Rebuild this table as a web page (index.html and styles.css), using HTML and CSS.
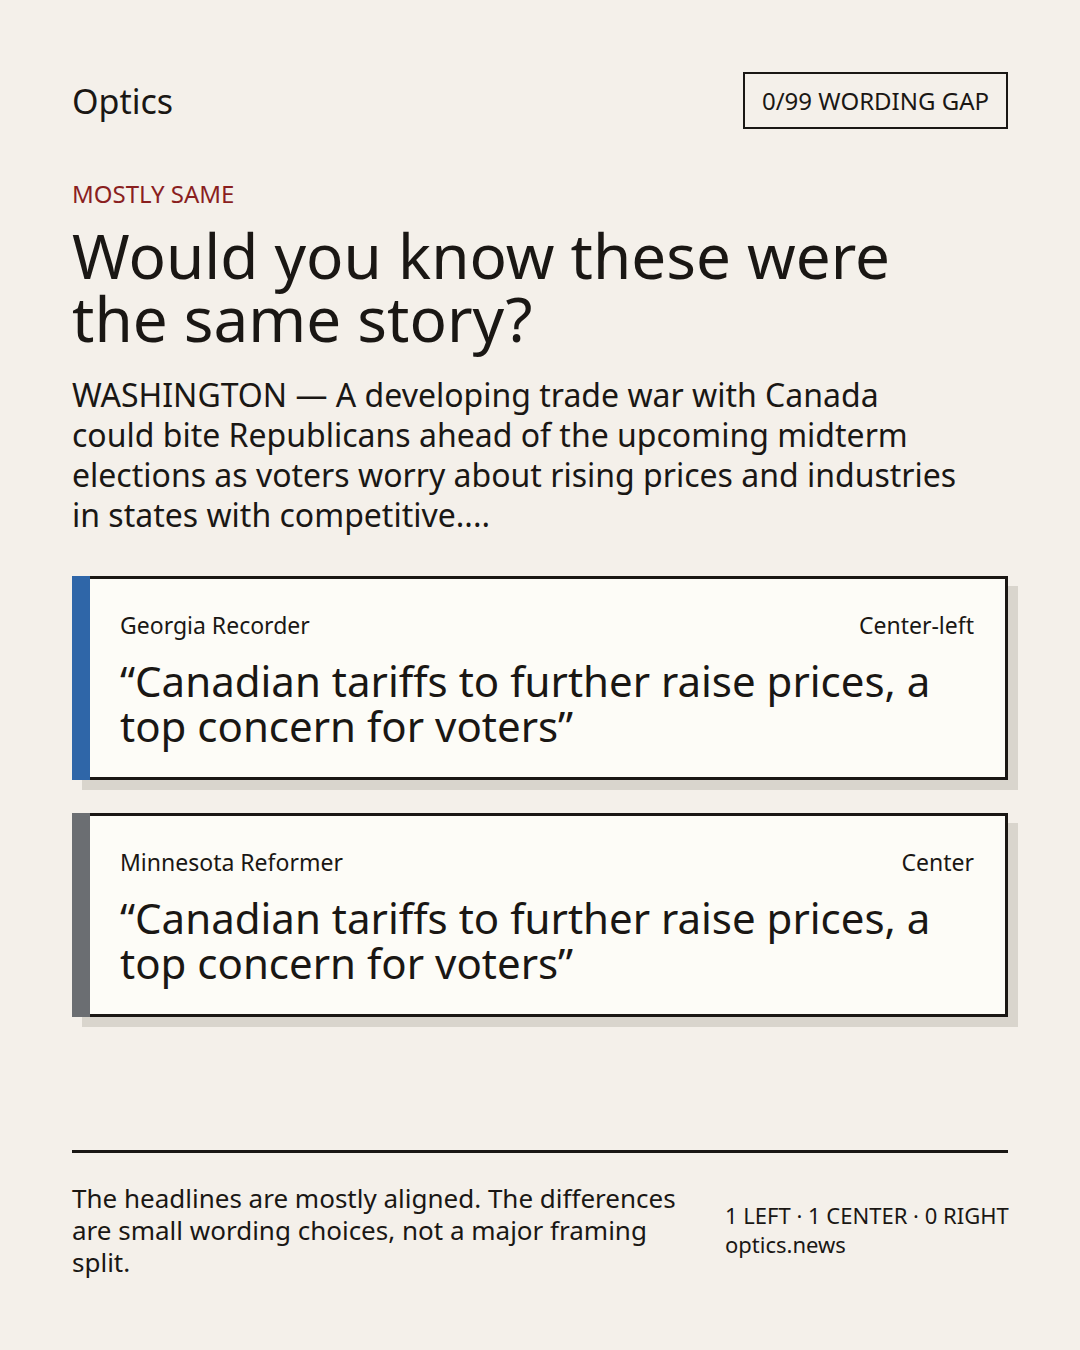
FILE: index.html
```html
<!DOCTYPE html>
<html lang="en">
<head>
<meta charset="utf-8">
<title>Optics</title>
<link rel="stylesheet" href="styles.css">
</head>
<body>
<main class="page">
  <header class="top">
    <div class="brand">Optics</div>
    <div class="badge">0/99 WORDING GAP</div>
  </header>
  <section class="intro">
    <div class="kicker">MOSTLY SAME</div>
    <h1 class="title">Would you know these were the same story?</h1>
    <p class="lede">WASHINGTON — A developing trade war with Canada could bite Republicans ahead of the upcoming midterm elections as voters worry about rising prices and industries in states with competitive....</p>
  </section>
  <section class="cards">
    <article class="card">
      <div class="card-bar bar-left"></div>
      <div class="card-body">
        <div class="card-meta"><span>Georgia Recorder</span><span>Center-left</span></div>
        <div class="card-head">“Canadian tariffs to further raise prices, a top concern for voters”</div>
      </div>
    </article>
    <article class="card">
      <div class="card-bar bar-center"></div>
      <div class="card-body">
        <div class="card-meta"><span>Minnesota Reformer</span><span>Center</span></div>
        <div class="card-head">“Canadian tariffs to further raise prices, a top concern for voters”</div>
      </div>
    </article>
  </section>
  <footer class="foot">
    <p class="summary">The headlines are mostly aligned. The differences are small wording choices, not a major framing split.</p>
    <div class="tally">
      <div>1 LEFT · 1 CENTER · 0 RIGHT</div>
      <div>optics.news</div>
    </div>
  </footer>
</main>
</body>
</html>
```

FILE: styles.css
```css
* { box-sizing: border-box; }
html, body { margin: 0; padding: 0; }
body {
  background: #f4f0ea;
  color: #1a1714;
  font-family: "Noto Sans", "Open Sans", sans-serif;
}
.page {
  width: 1080px;
  height: 1350px;
  padding: 72px 72px 0 72px;
  display: flex;
  flex-direction: column;
}
.top {
  display: flex;
  justify-content: space-between;
  align-items: center;
  height: 57px;
}
.brand {
  font-size: 34px;
  line-height: 1;
}
.badge {
  border: 2px solid #1a1714;
  height: 57px;
  padding: 0 17px;
  display: flex;
  align-items: center;
  font-size: 24px;
  white-space: nowrap;
}
.intro { margin-top: 50px; }
.kicker {
  color: #8a1f1f;
  font-size: 24px;
  line-height: 30px;
}
.title {
  margin: 15px 0 0 0;
  font-weight: 400;
  font-size: 62px;
  line-height: 63px;
  max-width: 840px;
}
.lede {
  margin: 25px 0 0 0;
  font-size: 32px;
  line-height: 40px;
  max-width: 890px;
}
.cards {
  margin-top: 41px;
  display: flex;
  flex-direction: column;
  gap: 33px;
}
.card {
  display: flex;
  box-shadow: 10px 10px 0 #d9d5cd;
}
.card-bar {
  width: 18px;
  flex: none;
}
.bar-left { background: #2f66a8; }
.bar-center { background: #6b6e72; }
.card-body {
  flex: 1;
  background: #fdfcf7;
  border: 3px solid #1a1714;
  border-left: 0;
  padding: 31px 31px 29px 30px;
}
.card-meta {
  display: flex;
  justify-content: space-between;
  font-size: 23px;
  line-height: 30px;
}
.card-head {
  margin-top: 18px;
  font-size: 42px;
  line-height: 45px;
}
.foot {
  margin-top: auto;
  margin-bottom: 72px;
  border-top: 3px solid #1a1714;
  padding-top: 29px;
  display: flex;
  align-items: center;
  gap: 48px;
}
.summary {
  margin: 0;
  width: 605px;
  flex: none;
  font-size: 26px;
  line-height: 32px;
}
.tally {
  font-size: 22px;
  line-height: 29px;
  white-space: nowrap;
}
```
